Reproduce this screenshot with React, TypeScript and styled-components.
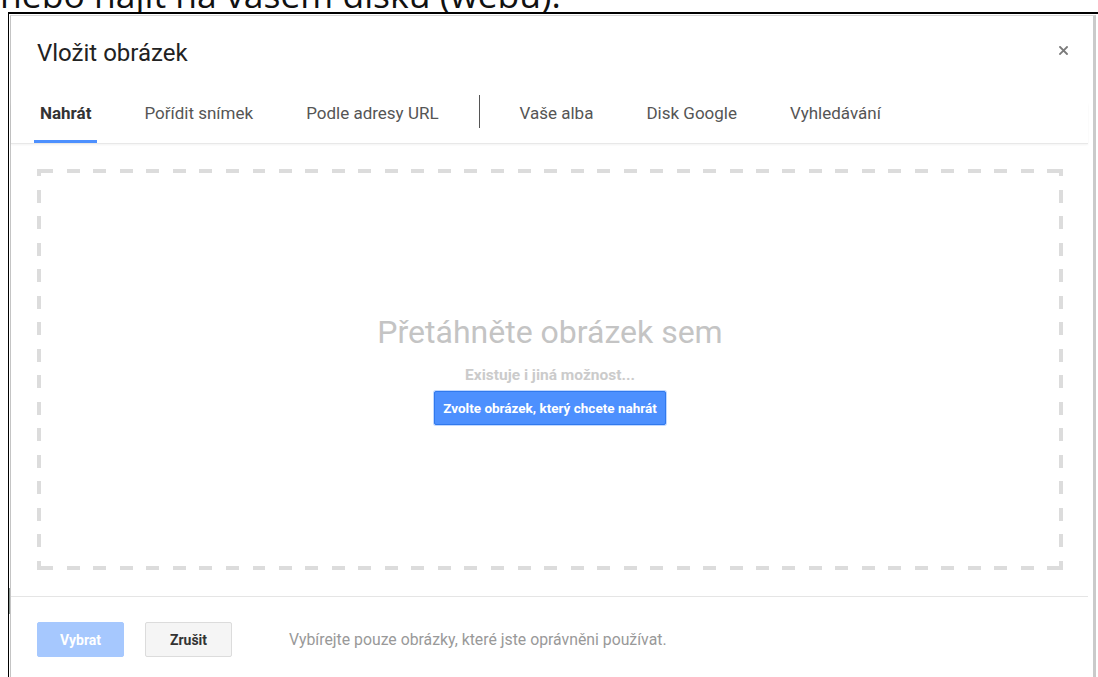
import React from "react";
import styled, { createGlobalStyle } from "styled-components";

const COLORS = {
  blue: "#4d90fe",
  blueBorder: "#3079ed",
  blueDisabled: "#a6c8fe",
  text: "#222",
  tab: "#555",
  dash: "#dcdcdc",
  line: "#e5e5e5",
};

const GlobalStyle = createGlobalStyle`
  html, body {
    margin: 0;
    padding: 0;
    background: #fff;
  }
  body {
    font-family: Roboto, "Liberation Sans", Arial, sans-serif;
  }
`;

const tabs = ["Nahrát", "Pořídit snímek", "Podle adresy URL", "|", "Vaše alba", "Disk Google", "Vyhledávání"];

const App = () => {
  return (
    <>
      <GlobalStyle />
      <Page>
        <Caption>
          <CaptionText>nebo najít na vašem disku (webu).</CaptionText>
        </Caption>
        <Frame>
          <Gutter />
          <Dialog>
            <Header>
              <Title>Vložit obrázek</Title>
              <Close aria-label="Zavřít">
                <svg width="9" height="9" viewBox="0 0 9 9">
                  <path d="M1 1L8 8M8 1L1 8" stroke="#7a7a7a" strokeWidth="1.8" strokeLinecap="square" />
                </svg>
              </Close>
            </Header>

            <TabBar>
              {tabs.map((t, i) =>
                t === "|" ? (
                  <TabDivider key={i} />
                ) : (
                  <Tab key={i} $active={i === 0}>
                    {t}
                  </Tab>
                )
              )}
            </TabBar>

            <Body>
              <DropZone>
                <DropTitle>Přetáhněte obrázek sem</DropTitle>
                <DropHint>Existuje i jiná možnost...</DropHint>
                <PickButton>Zvolte obrázek, který chcete nahrát</PickButton>
              </DropZone>
            </Body>

            <Footer>
              <ActionButton $primary disabled>
                Vybrat
              </ActionButton>
              <ActionButton>Zrušit</ActionButton>
              <FooterNote>Vybírejte pouze obrázky, které jste oprávněni používat.</FooterNote>
            </Footer>
          </Dialog>
        </Frame>
      </Page>
    </>
  );
};

export default App;

const Page = styled.div`
  height: 100vh;
  display: flex;
  flex-direction: column;
  overflow: hidden;
`;

// only the lower edge of the line above the frame is visible
const Caption = styled.div`
  height: 12px;
  overflow: hidden;
  flex-shrink: 0;
`;

const CaptionText = styled.div`
  font-family: "Open Sans", "Liberation Sans", sans-serif;
  font-size: 35.5px;
  line-height: 36px;
  margin-top: -24px;
  color: #111;
  white-space: nowrap;
`;

const Frame = styled.div`
  flex: 1;
  min-height: 0;
  display: flex;
  margin-left: 8px;
  border-top: 2px solid #000;
  border-left: 1px solid #000;
`;

const Gutter = styled.div`
  width: 1px;
  flex-shrink: 0;
  background: linear-gradient(
    to bottom,
    transparent 0,
    transparent 574px,
    #8a9590 574px,
    #8a9590 600px,
    transparent 600px
  );
`;

const Dialog = styled.div`
  flex: 1;
  display: flex;
  flex-direction: column;
  margin: 1px 2px 0 0;
  padding-right: 5px;
  border-top: 1px solid #d6d6d6;
  border-left: 1px solid #c4c4c4;
  border-right: 3px solid #cacaca;
  background: #fff;
`;

const Header = styled.div`
  display: flex;
  justify-content: space-between;
  align-items: flex-start;
  padding: 25px 20px 0 26px;
`;

const Title = styled.h1`
  margin: 0;
  font-size: 24px;
  line-height: 24px;
  font-weight: 400;
  color: ${COLORS.text};
`;

const Close = styled.button`
  margin-top: 5px;
  padding: 0;
  border: 0;
  background: none;
  width: 9px;
  height: 9px;
  display: flex;
  cursor: pointer;
`;

const TabBar = styled.div`
  display: flex;
  align-items: flex-start;
  gap: 41px;
  margin-top: 38px;
  padding-left: 23px;
  border-bottom: 1px solid #e8e8e8;
  box-shadow: 0 1px 2px rgba(0, 0, 0, 0.05);
`;

const Tab = styled.div<{ $active?: boolean }>`
  padding: 0 6px 17px;
  font-size: 17px;
  line-height: 20px;
  font-weight: ${(p) => (p.$active ? 700 : 400)};
  color: ${(p) => (p.$active ? "#333" : COLORS.tab)};
  border-bottom: 3px solid ${(p) => (p.$active ? COLORS.blue : "transparent")};
  white-space: nowrap;
  cursor: pointer;
`;

const TabDivider = styled.div`
  width: 1px;
  height: 33px;
  margin: -8px -7px 0;
  background: #555;
`;

const Body = styled.div`
  padding: 25px 25px 0 26px;
`;

// long, widely spaced dashes drawn as edge gradients
const hDash = `repeating-linear-gradient(90deg, transparent 0 3.5px, ${COLORS.dash} 3.5px 16.5px, transparent 16.5px 26.5px)`;
const vDash = `repeating-linear-gradient(180deg, ${COLORS.dash} 0 7.5px, transparent 7.5px 21px, ${COLORS.dash} 21px 26.5px)`;

const DropZone = styled.div`
  height: 401px;
  box-sizing: border-box;
  display: flex;
  flex-direction: column;
  align-items: center;
  justify-content: center;
  background-image: ${hDash}, ${hDash}, ${vDash}, ${vDash};
  background-size: 100% 4px, 100% 4px, 4px 100%, 4px 100%;
  background-position: left top, left bottom, left top, right top;
  background-repeat: no-repeat;
`;

const DropTitle = styled.div`
  font-size: 32px;
  line-height: 36px;
  color: #c4c4c4;
`;

const DropHint = styled.div`
  margin-top: 16px;
  font-size: 15.5px;
  line-height: 18px;
  font-weight: 700;
  color: #cbcbcb;
`;

const PickButton = styled.button`
  margin-top: 7px;
  height: 34px;
  padding: 0 8px;
  border: 1px solid ${COLORS.blueBorder};
  border-radius: 2px;
  background: ${COLORS.blue};
  box-shadow: 0 0 0 1px rgba(77, 144, 254, 0.35);
  color: #fff;
  font-family: inherit;
  font-size: 13.5px;
  font-weight: 700;
  cursor: pointer;
`;

const Footer = styled.div`
  display: flex;
  align-items: center;
  gap: 21px;
  margin-top: 26px;
  padding: 25px 26px;
  border-top: 1px solid ${COLORS.line};
`;

const ActionButton = styled.button<{ $primary?: boolean }>`
  height: 35px;
  min-width: 87px;
  padding: 0 16px;
  border-radius: 2px;
  border: 1px solid ${(p) => (p.$primary ? COLORS.blueDisabled : "#dcdcdc")};
  background: ${(p) => (p.$primary ? COLORS.blueDisabled : "#f5f5f5")};
  color: ${(p) => (p.$primary ? "#fff" : "#333")};
  font-family: inherit;
  font-size: 14px;
  font-weight: 700;
  cursor: pointer;
`;

const FooterNote = styled.span`
  margin-left: 36px;
  font-size: 15.8px;
  color: #999;
`;
